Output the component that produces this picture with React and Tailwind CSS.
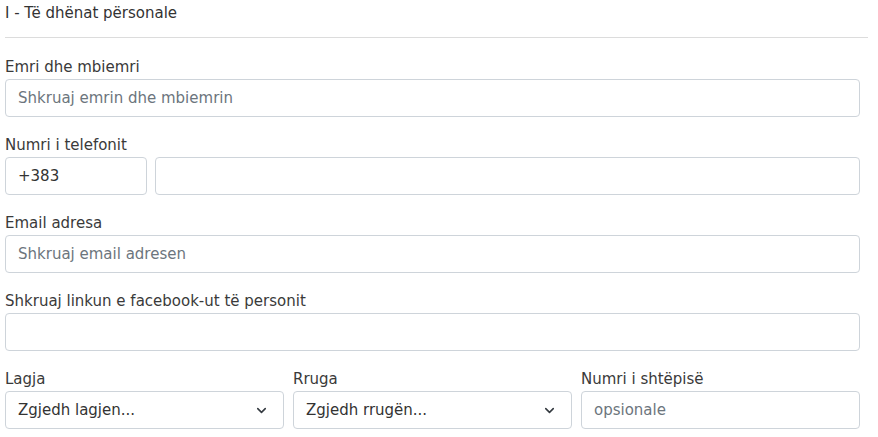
import { ChevronDown } from 'lucide-react';

const font = { fontFamily: '"DejaVu Sans", "Open Sans", sans-serif' };

function Field({ label, children }) {
  return (
    <div className="flex flex-col">
      <label className="text-[15px] leading-[18px] mb-[3px] text-[#3a3a3a]">{label}</label>
      {children}
    </div>
  );
}

function TextInput({ placeholder, value, width = 'w-full' }) {
  return (
    <input
      className={`h-[38px] ${width} min-w-0 rounded-[4px] border border-[#ced4da] bg-white px-3 text-[15px] text-[#333] placeholder:text-[#6c757d] outline-none`}
      placeholder={placeholder}
      defaultValue={value}
    />
  );
}

function Select({ text }) {
  return (
    <div className="h-[38px] w-full rounded-[4px] border border-[#ced4da] bg-white px-3 flex items-center justify-between text-[15px] text-[#333]">
      <span>{text}</span>
      <ChevronDown size={15} strokeWidth={2.5} className="text-[#343a40] mr-[2px]" />
    </div>
  );
}

export default function App() {
  return (
    <div className="bg-white w-[878px] h-[437px] overflow-hidden pl-[5px] pr-[10px]" style={font}>
      <div className="text-[15px] leading-[18px] pt-[4px] pb-[15px] text-[#333] border-b border-[#dcdcdc]">
        I - Të dhënat përsonale
      </div>
      <div className="w-[855px] flex flex-col gap-[19px] pt-[20px]">
        <Field label="Emri dhe mbiemri">
          <TextInput placeholder="Shkruaj emrin dhe mbiemrin" />
        </Field>
        <Field label="Numri i telefonit">
          <div className="flex gap-[8px]">
            <TextInput value="+383" width="w-[142px] shrink-0" />
            <TextInput width="flex-1" />
          </div>
        </Field>
        <Field label="Email adresa">
          <TextInput placeholder="Shkruaj email adresen" />
        </Field>
        <Field label="Shkruaj linkun e facebook-ut të personit">
          <TextInput />
        </Field>
        <div className="grid grid-cols-3 gap-[9px]">
          <Field label="Lagja">
            <Select text="Zgjedh lagjen..." />
          </Field>
          <Field label="Rruga">
            <Select text="Zgjedh rrugën..." />
          </Field>
          <Field label="Numri i shtëpisë">
            <TextInput placeholder="opsionale" />
          </Field>
        </div>
      </div>
    </div>
  );
}
